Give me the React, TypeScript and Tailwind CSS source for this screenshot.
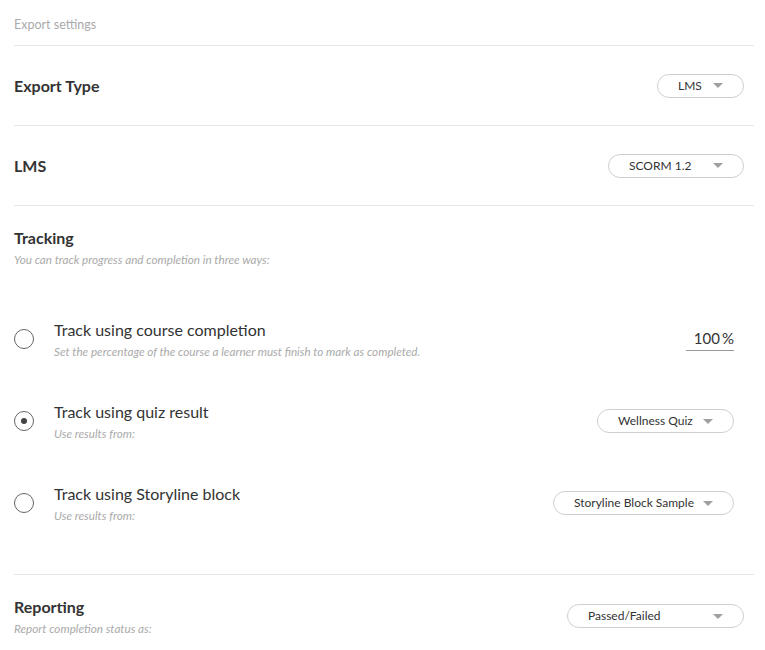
import { useState } from "react"

const Caret = () => (
  <svg width="10" height="5" viewBox="0 0 10 5" className="shrink-0">
    <path d="M0 0 L10 0 L5 5 Z" fill="#a0a0a0" />
  </svg>
)

const Select = ({ value, width }: { value: string; width: string }) => (
  <button
    className={`h-6 ${width} flex items-center justify-between pl-5 pr-5 rounded-full border border-[#cfcfcf] bg-white text-[12px] text-[#333]`}
  >
    <span>{value}</span>
    <Caret />
  </button>
)

const Radio = ({ checked }: { checked: boolean }) => (
  <div className="w-5 h-5 rounded-full border border-[#666] flex items-center justify-center shrink-0">
    {checked && <div className="w-[6px] h-[6px] rounded-full bg-[#444]" />}
  </div>
)

type Option = {
  title: string
  hint: string
  right: React.ReactNode
}

const App = () => {
  const [selected, setSelected] = useState<number>(1)

  const options: Option[] = [
    {
      title: "Track using course completion",
      hint: "Set the percentage of the course a learner must finish to mark as completed.",
      right: (
        <div className="w-12 border-b border-[#999] flex justify-end items-baseline pb-[2px] text-[15px] leading-5 text-[#333]">
          <span>100</span>
          <span className="ml-[2px]">%</span>
        </div>
      ),
    },
    {
      title: "Track using quiz result",
      hint: "Use results from:",
      right: <Select value="Wellness Quiz" width="w-[137px]" />,
    },
    {
      title: "Track using Storyline block",
      hint: "Use results from:",
      right: <Select value="Storyline Block Sample" width="w-[181px]" />,
    },
  ]

  return (
    <div className="min-h-screen bg-white pl-[14px] pr-[11px] font-['Lato','Noto_Sans',sans-serif] text-[#333]">
      <div className="h-[46px] pt-[17px] border-b border-[#e6e6e6]">
        <p className="text-[12.5px] leading-4 text-[#aaa]">Export settings</p>
      </div>

      <div className="h-[80px] pr-[10px] flex items-center justify-between border-b border-[#e6e6e6]">
        <h2 className="text-[16px] font-bold leading-5">Export Type</h2>
        <Select value="LMS" width="w-[87px]" />
      </div>

      <div className="h-[80px] pr-[10px] flex items-center justify-between border-b border-[#e6e6e6]">
        <h2 className="text-[16px] font-bold leading-5">LMS</h2>
        <Select value="SCORM 1.2" width="w-[136px]" />
      </div>

      <div className="pt-[22px] pb-[52px] border-b border-[#e6e6e6]">
        <h2 className="text-[16px] font-bold leading-5">Tracking</h2>
        <p className="mt-1 text-[11.7px] leading-[14px] italic text-[#aaa]">
          You can track progress and completion in three ways:
        </p>

        <div className="mt-[54px] flex flex-col gap-[44px] pr-[20px]">
          {options.map((o, i) => (
            <div key={o.title} className="flex items-center justify-between">
              <div className="flex items-center cursor-pointer" onClick={() => setSelected(i)}>
                <Radio checked={selected === i} />
                <div className="ml-5">
                  <p className="text-[16px] leading-5">{o.title}</p>
                  <p className="mt-1 text-[11.7px] leading-[14px] italic text-[#aaa]">{o.hint}</p>
                </div>
              </div>
              {o.right}
            </div>
          ))}
        </div>
      </div>

      <div className="pt-[22px] pr-[10px] flex items-center justify-between">
        <div>
          <h2 className="text-[16px] font-bold leading-5">Reporting</h2>
          <p className="mt-1 text-[11.7px] leading-[14px] italic text-[#aaa]">Report completion status as:</p>
        </div>
        <Select value="Passed/Failed" width="w-[177px]" />
      </div>
    </div>
  )
}

export default App
